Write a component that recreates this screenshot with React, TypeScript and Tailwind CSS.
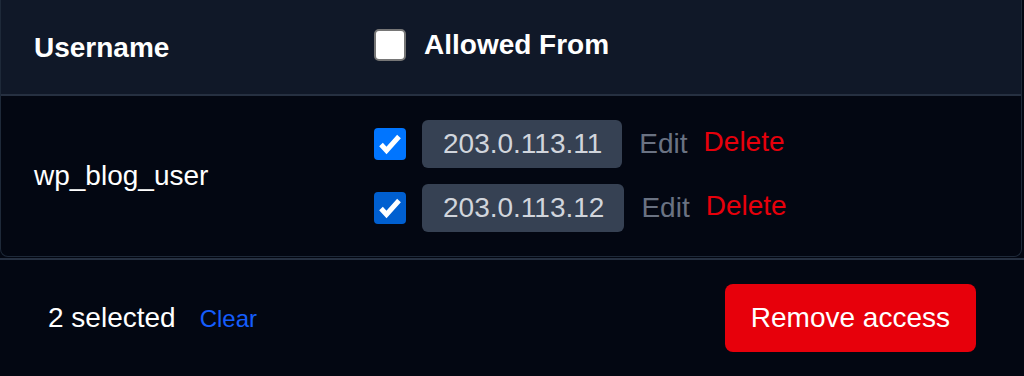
import React from "react";

type Entry = { ip: string; selected: boolean; hover?: boolean };

const entries: Entry[] = [
  { ip: "203.0.113.11", selected: true },
  { ip: "203.0.113.12", selected: true, hover: true },
];

function Check({ checked, hover }: { checked: boolean; hover?: boolean }) {
  if (!checked) {
    return (
      <span className="block w-8 h-8 shrink-0 rounded-[5px] border-2 border-[#767676] bg-white" />
    );
  }
  return (
    <span
      className={`flex w-8 h-8 shrink-0 items-center justify-center rounded-[4px] ${
        hover ? "bg-[#005fd0]" : "bg-[#0075ff]"
      }`}
    >
      <svg viewBox="0 0 32 32" className="w-8 h-8">
        <path
          d="M7 16.5l5.5 6L25 8.5"
          fill="none"
          stroke="white"
          strokeWidth={5}
          strokeLinejoin="miter"
        />
      </svg>
    </span>
  );
}

export default function App() {
  return (
    <div className="w-full h-[376px] overflow-hidden bg-[#030712] text-white font-['Liberation_Sans',Arial,sans-serif]">
      {/* Table */}
      <div className="mr-[2px] mb-px border-x border-b border-[#1e2939] rounded-b-lg overflow-hidden">
        {/* Header */}
        <div className="flex h-[96px] bg-[#101828] border-b-2 border-[#263041]">
          <div className="w-[373px] pl-[33px] pt-[34px] text-[28px] leading-none font-bold">
            Username
          </div>
          <div className="flex items-center gap-[18px] pb-[4px]">
            <Check checked={false} />
            <span className="text-[28px] leading-none font-bold">Allowed From</span>
          </div>
        </div>

        {/* Row */}
        <div className="flex items-center py-6">
          <div className="w-[373px] pl-[33px] text-[28px] leading-none">wp_blog_user</div>
          <div className="flex flex-col gap-4">
            {entries.map((e) => (
              <div key={e.ip} className="flex items-center">
                <Check checked={e.selected} hover={e.hover} />
                <span className="ml-4 h-12 flex items-center pl-[21px] pr-5 rounded-[6px] bg-[#364153] text-[#d1d5dc] text-[28px] leading-none">
                  {e.ip}
                </span>
                <button className="ml-[17px] text-[#6a7282] text-[28px] leading-none">Edit</button>
                <button className="ml-4 pb-1 text-[#e7000b] text-[28px] leading-none">
                  Delete
                </button>
              </div>
            ))}
          </div>
        </div>
      </div>

      {/* Footer */}
      <div className="flex items-center justify-between h-[118px] pl-12 pr-12 border-t-2 border-[#263041]">
        <div className="flex items-baseline gap-6">
          <span className="text-[28px] leading-none">2 selected</span>
          <button className="text-[#155dfc] text-[24px] leading-none">Clear</button>
        </div>
        <button className="h-[68px] px-[26px] rounded-lg bg-[#e7000b] text-white text-[28px] leading-none">
          Remove access
        </button>
      </div>
    </div>
  );
}
